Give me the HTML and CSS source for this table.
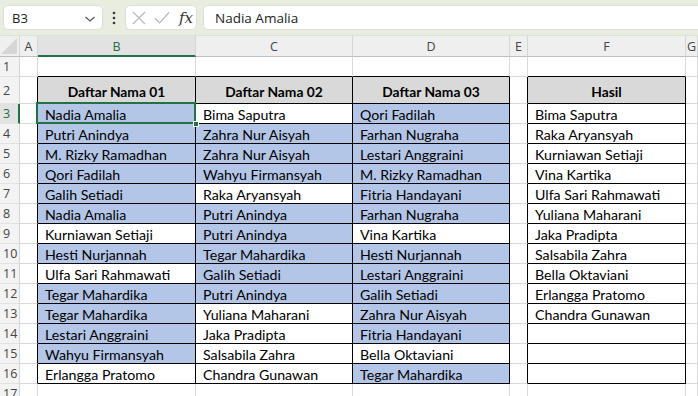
FILE: index.html
```html
<!DOCTYPE html>
<html>
<head>
<meta charset="utf-8">
<link rel="stylesheet" href="styles.css">
</head>
<body>
<div class="toolbar">
  <div class="namebox">
    <span>B3</span>
    <svg class="chev" width="12" height="8" viewBox="0 0 12 8"><path d="M1.5 2 L6 6 L10.5 2" fill="none" stroke="#555" stroke-width="1.2"/></svg>
  </div>
  <svg class="dots" width="4" height="16" viewBox="0 0 4 16"><circle cx="2" cy="3" r="1.3" fill="#333"/><circle cx="2" cy="8" r="1.3" fill="#333"/><circle cx="2" cy="13" r="1.3" fill="#333"/></svg>
  <div class="fxbox">
    <svg width="14" height="14" viewBox="0 0 14 14"><path d="M1 1 L13 13 M13 1 L1 13" stroke="#b8b8b8" stroke-width="1.2" fill="none"/></svg>
    <svg width="16" height="14" viewBox="0 0 16 14"><path d="M1 7.5 L5.5 12 L15 1.5" stroke="#b8b8b8" stroke-width="1.2" fill="none"/></svg>
    <span class="fx">fx</span>
  </div>
  <div class="formula">Nadia Amalia</div>
</div>

<div class="sheet">
  <div class="row hdr">
    <div class="corner"><svg width="16" height="16" viewBox="0 0 16 16"><path d="M16 0 L16 16 L0 16 Z" fill="#d6d6d6"/></svg></div>
    <div class="ch">A</div><div class="ch sel">B</div><div class="ch">C</div><div class="ch">D</div><div class="ch">E</div><div class="ch">F</div><div class="ch">G</div>
  </div>
  <div class="row r1">
    <div class="rn">1</div><div class="c"></div><div class="c tb"></div><div class="c tb"></div><div class="c tb"></div><div class="c"></div><div class="c tb"></div><div class="c"></div>
  </div>
  <div class="row r2">
    <div class="rn">2</div><div class="c lb"></div><div class="c t h">Daftar Nama 01</div><div class="c t h">Daftar Nama 02</div><div class="c t h">Daftar Nama 03</div><div class="c lb"></div><div class="c t h">Hasil</div><div class="c"></div>
  </div>
  <div class="row">
    <div class="rn rsel">3</div><div class="c lb"></div><div class="c t b active">Nadia Amalia<span class="handle"></span></div><div class="c t">Bima Saputra</div><div class="c t b">Qori Fadilah</div><div class="c lb"></div><div class="c t">Bima Saputra</div><div class="c"></div>
  </div>
  <div class="row">
    <div class="rn">4</div><div class="c lb"></div><div class="c t b">Putri Anindya</div><div class="c t b">Zahra Nur Aisyah</div><div class="c t b">Farhan Nugraha</div><div class="c lb"></div><div class="c t">Raka Aryansyah</div><div class="c"></div>
  </div>
  <div class="row">
    <div class="rn">5</div><div class="c lb"></div><div class="c t b">M. Rizky Ramadhan</div><div class="c t b">Zahra Nur Aisyah</div><div class="c t b">Lestari Anggraini</div><div class="c lb"></div><div class="c t">Kurniawan Setiaji</div><div class="c"></div>
  </div>
  <div class="row">
    <div class="rn">6</div><div class="c lb"></div><div class="c t b">Qori Fadilah</div><div class="c t b">Wahyu Firmansyah</div><div class="c t b">M. Rizky Ramadhan</div><div class="c lb"></div><div class="c t">Vina Kartika</div><div class="c"></div>
  </div>
  <div class="row">
    <div class="rn">7</div><div class="c lb"></div><div class="c t b">Galih Setiadi</div><div class="c t">Raka Aryansyah</div><div class="c t b">Fitria Handayani</div><div class="c lb"></div><div class="c t">Ulfa Sari Rahmawati</div><div class="c"></div>
  </div>
  <div class="row">
    <div class="rn">8</div><div class="c lb"></div><div class="c t b">Nadia Amalia</div><div class="c t b">Putri Anindya</div><div class="c t b">Farhan Nugraha</div><div class="c lb"></div><div class="c t">Yuliana Maharani</div><div class="c"></div>
  </div>
  <div class="row">
    <div class="rn">9</div><div class="c lb"></div><div class="c t">Kurniawan Setiaji</div><div class="c t b">Putri Anindya</div><div class="c t">Vina Kartika</div><div class="c lb"></div><div class="c t">Jaka Pradipta</div><div class="c"></div>
  </div>
  <div class="row">
    <div class="rn">10</div><div class="c lb"></div><div class="c t b">Hesti Nurjannah</div><div class="c t b">Tegar Mahardika</div><div class="c t b">Hesti Nurjannah</div><div class="c lb"></div><div class="c t">Salsabila Zahra</div><div class="c"></div>
  </div>
  <div class="row">
    <div class="rn">11</div><div class="c lb"></div><div class="c t">Ulfa Sari Rahmawati</div><div class="c t b">Galih Setiadi</div><div class="c t b">Lestari Anggraini</div><div class="c lb"></div><div class="c t">Bella Oktaviani</div><div class="c"></div>
  </div>
  <div class="row">
    <div class="rn">12</div><div class="c lb"></div><div class="c t b">Tegar Mahardika</div><div class="c t b">Putri Anindya</div><div class="c t b">Galih Setiadi</div><div class="c lb"></div><div class="c t">Erlangga Pratomo</div><div class="c"></div>
  </div>
  <div class="row">
    <div class="rn">13</div><div class="c lb"></div><div class="c t b">Tegar Mahardika</div><div class="c t">Yuliana Maharani</div><div class="c t b">Zahra Nur Aisyah</div><div class="c lb"></div><div class="c t">Chandra Gunawan</div><div class="c"></div>
  </div>
  <div class="row">
    <div class="rn">14</div><div class="c lb"></div><div class="c t b">Lestari Anggraini</div><div class="c t">Jaka Pradipta</div><div class="c t b">Fitria Handayani</div><div class="c lb"></div><div class="c t"></div><div class="c"></div>
  </div>
  <div class="row">
    <div class="rn">15</div><div class="c lb"></div><div class="c t b">Wahyu Firmansyah</div><div class="c t">Salsabila Zahra</div><div class="c t">Bella Oktaviani</div><div class="c lb"></div><div class="c t"></div><div class="c"></div>
  </div>
  <div class="row">
    <div class="rn">16</div><div class="c lb"></div><div class="c t">Erlangga Pratomo</div><div class="c t">Chandra Gunawan</div><div class="c t b">Tegar Mahardika</div><div class="c lb"></div><div class="c t"></div><div class="c"></div>
  </div>
  <div class="row">
    <div class="rn">17</div><div class="c"></div><div class="c"></div><div class="c"></div><div class="c"></div><div class="c"></div><div class="c"></div><div class="c"></div>
  </div>
</div>
</body>
</html>
```

FILE: styles.css
```css
* { box-sizing: border-box; }
html, body { margin: 0; padding: 0; background: #fff; overflow: hidden; }
body { width: 698px; height: 396px; font-family: "Open Sans", "Noto Sans", sans-serif; }

.toolbar {
  height: 36px;
  background: #e8ede0;
  display: flex;
  align-items: center;
  padding: 0 0 0 3px;
  border-bottom: 1px solid #dde2d6;
}
.namebox {
  width: 100px;
  height: 25px;
  background: #fff;
  border: 1px solid #dcdfd8;
  border-radius: 5px;
  display: flex;
  align-items: center;
  justify-content: space-between;
  padding: 0 6px 0 8px;
  font-family: "Open Sans", sans-serif;
  font-size: 13px;
  color: #222;
}
.chev { margin-top: 2px; }
.dots { margin: 0 9px 0 9px; }
.fxbox {
  width: 72px;
  height: 25px;
  background: #fff;
  border: 1px solid #dcdfd8;
  border-radius: 5px;
  display: flex;
  align-items: center;
  gap: 8px;
  padding: 0 0 0 6px;
}
.fx {
  font-family: "DejaVu Serif", "Liberation Serif", serif;
  font-style: italic;
  font-size: 15px;
  color: #333;
  margin-left: 1px;
}
.formula {
  flex: 1;
  height: 25px;
  margin-left: 6px;
  background: #fff;
  border: 1px solid #dcdfd8;
  border-right: none;
  border-radius: 5px 0 0 5px;
  display: flex;
  align-items: center;
  padding-left: 11px;
  font-family: "Open Sans", sans-serif;
  font-size: 13.5px;
  color: #222;
}

.sheet { display: flex; flex-direction: column; }
.row {
  display: grid;
  grid-template-columns: 20px 18px 158px 157px 157px 18px 158px 1fr;
  height: 20px;
}
.row.hdr { height: 21px; }
.row.r1 { height: 20px; }
.row.r2 { height: 27px; }

.corner, .ch {
  background: #efefef;
  border-right: 1px solid #d6d6d6;
  border-bottom: 1px solid #bdbdbd;
}
.corner { display: flex; align-items: flex-end; justify-content: flex-end; padding: 0 2px 2px 0; }
.ch {
  display: flex;
  align-items: center;
  justify-content: center;
  font-size: 12.5px;
  color: #444;
}
.ch.sel {
  color: #1e6e42;
  background: #e2e2e2;
  border-bottom: 2px solid #217346;
  padding-top: 1px;
}
.rn {
  background: #f3f3f3;
  border-right: 1px solid #d6d6d6;
  border-bottom: 1px solid #e2e2e2;
  font-size: 12.5px;
  color: #444;
  display: flex;
  align-items: center;
  padding-left: 3px;
}
.rn.rsel { color: #1e6e42; background: #e2e2e2; border-right: 2px solid #217346; }

.c {
  border-right: 1px solid #dadada;
  border-bottom: 1px solid #dadada;
  font-family: "Lato", "Liberation Sans", sans-serif;
  font-size: 14.2px;
  color: #000;
  display: flex;
  align-items: center;
  padding: 1px 0 0 7px;
  white-space: nowrap;
  overflow: visible;
  position: relative;
}
.c.lb { border-right-color: #000; }
.c.tb { border-bottom-color: #000; }
.c.t { border-right-color: #000; border-bottom-color: #000; }
.c.b { background: #b4c6e7; }
.c.h {
  background: #d9d9d9;
  font-weight: bold;
  font-size: 13.8px;
  justify-content: center;
  padding: 2px 0 0 0;
}
.c.active::after {
  content: "";
  position: absolute;
  left: -2px;
  top: -2px;
  right: -1px;
  bottom: -1px;
  border: 2px solid #217346;
  pointer-events: none;
}
.handle {
  position: absolute;
  right: -4px;
  bottom: -4px;
  width: 6px;
  height: 6px;
  background: #217346;
  border: 1px solid #fff;
  z-index: 2;
}
```
